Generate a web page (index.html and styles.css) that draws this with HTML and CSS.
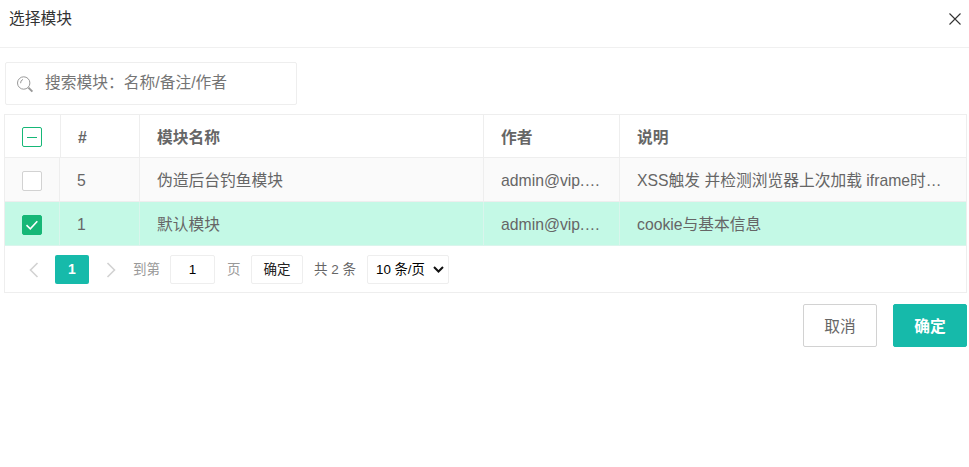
FILE: index.html
```html
<!DOCTYPE html>
<html lang="zh-CN">
<head>
<meta charset="utf-8">
<title>选择模块</title>
<link rel="stylesheet" href="styles.css">
</head>
<body>
<header class="head">
  <span class="title">选择模块</span>
  <svg class="close" width="14" height="14" viewBox="0 0 14 14"><path d="M1.5 1.5l11 11M12.5 1.5l-11 11" stroke="#333" stroke-width="1.1" fill="none"/></svg>
</header>
<div class="search">
  <svg class="search-icon" width="18" height="18" viewBox="0 0 18 18" fill="none"><circle cx="7.7" cy="8" r="6.2" stroke="#999" stroke-width="1"/><path d="M7 4.4a3.8 3.8 0 0 0-2.4 3.8" stroke="#999" stroke-width="1"/><path d="M12.4 12.6l4 4" stroke="#999" stroke-width="2"/></svg>
  <span class="placeholder">搜索模块：名称/备注/作者</span>
</div>
<section class="grid">
  <table class="thead">
    <colgroup><col class="c1h"><col class="c2h"><col class="c3"><col class="c4"><col></colgroup>
    <thead>
      <tr>
        <th><span class="box half"><i></i></span></th>
        <th>#</th><th>模块名称</th><th>作者</th><th>说明</th>
      </tr>
    </thead>
  </table>
  <table class="tbody">
    <colgroup><col class="c1b"><col class="c2b"><col class="c3"><col class="c4"><col></colgroup>
    <tbody>
      <tr class="odd">
        <td><span class="box"></span></td>
        <td>5</td><td>伪造后台钓鱼模块</td>
        <td><div class="cut">admin@vip.qq.com</div></td>
        <td><div class="cut">XSS触发 并检测浏览器上次加载 iframe时间与来源信息</div></td>
      </tr>
      <tr class="sel">
        <td><span class="box on"><svg width="14" height="12" viewBox="0 0 14 12" fill="none"><path d="M1.5 6.2l3.8 3.6 7-7.6" stroke="#fff" stroke-width="1.6"/></svg></span></td>
        <td>1</td><td>默认模块</td>
        <td><div class="cut">admin@vip.qq.com</div></td>
        <td><div class="cut">cookie与基本信息</div></td>
      </tr>
    </tbody>
  </table>
  <nav class="pager">
    <svg class="arrow" width="12" height="16" viewBox="0 0 12 16" fill="none"><path d="M9.5 1l-7 7 7 7" stroke="#d2d2d2" stroke-width="1.6"/></svg>
    <span class="cur">1</span>
    <svg class="arrow next" width="12" height="16" viewBox="0 0 12 16" fill="none"><path d="M2.5 1l7 7-7 7" stroke="#d2d2d2" stroke-width="1.6"/></svg>
    <span class="lbl to">到第</span>
    <span class="num">1</span>
    <span class="lbl page">页</span>
    <span class="go">确定</span>
    <span class="total">共 2 条</span>
    <span class="size-wrap">
      <select class="size"><option>10 条/页</option></select>
      <svg class="chev" width="11" height="7" viewBox="0 0 11 7" fill="none"><path d="M1 1l4.5 4.5L10 1" stroke="#111" stroke-width="2"/></svg>
    </span>
  </nav>
</section>
<footer class="foot">
  <button class="btn ghost">取消</button>
  <button class="btn primary">确定</button>
</footer>
</body>
</html>
```

FILE: styles.css
```css
* { box-sizing: border-box; }
html, body { margin: 0; padding: 0; background: #fff; }
body {
  width: 969px;
  height: 467px;
  overflow: hidden;
  font-family: "Liberation Sans", "Noto Sans CJK SC", sans-serif;
  font-size: 15.75px;
  color: #666;
}
.head {
  height: 48px;
  border-bottom: 1px solid #f0f0f0;
  display: flex;
  justify-content: space-between;
  align-items: flex-start;
  padding: 7px 7px 0 9px;
}
.title { font-size: 15.75px; line-height: 24px; color: #333; }
.close { margin-top: 5px; }
.search {
  margin: 14px 0 0 5px;
  width: 292px;
  height: 43px;
  border: 1px solid #eee;
  border-radius: 2px;
  display: flex;
  align-items: center;
  padding-left: 10px;
}
.search-icon { flex: none; }
.placeholder { margin-left: 11px; font-size: 15.75px; line-height: 38px; color: #757575; padding-bottom: 2px; }
.grid {
  margin: 9px 2px 0 4px;
  width: 963px;
  border: 1px solid #eee;
}
table {
  width: 100%;
  table-layout: fixed;
  border-collapse: separate;
  border-spacing: 0;
  font-size: 15.75px;
  line-height: 22px;
}
.c1h { width: 56px; }
.c2h { width: 79px; }
.c1b { width: 55px; }
.c2b { width: 80px; }
.c3 { width: 344px; }
.c4 { width: 136px; }
th, td {
  border-right: 1px solid #eee;
  border-bottom: 1px solid #eee;
  padding: 2px 17px 0;
  text-align: left;
  height: 44px;
  color: #666;
}
th { font-weight: 700; height: 43px; padding-top: 4px; }
tr > th:first-child { padding: 2px 0 0; }
tr > td:first-child { padding: 3px 0 0; }
tr > :last-child { border-right: 0; }
.odd td { background: #fafafa; }
.sel td { background: #c4f9e6; border-color: #d9f5ec; }
.cut { white-space: nowrap; overflow: hidden; text-overflow: ellipsis; }
.box {
  display: flex;
  width: 20px;
  height: 20px;
  margin-left: 17px;
  border: 1px solid #d2d2d2;
  border-radius: 2px;
  background: #fff;
  align-items: center;
  justify-content: center;
}
.box.half { border-color: #16b777; }
.box.half i { display: block; width: 10px; height: 1px; background: #16b777; }
.box.on { background: #16b777; border-color: #16b777; }
.pager {
  height: 46px;
  display: flex;
  align-items: flex-start;
  font-size: 13.5px;
  line-height: 29px;
  padding: 9px 0 0 23px;
}
.arrow { flex: none; margin-top: 7px; }
.cur {
  margin-left: 15px;
  width: 34px;
  height: 29px;
  background: #16baaa;
  color: #fff;
  font-weight: 700;
  font-size: 14px;
  border-radius: 2px;
  display: flex;
  align-items: center;
  justify-content: center;
}
.next { margin-left: 16px; }
.lbl { color: #999; }
.to { margin-left: 16px; }
.num {
  margin-left: 10px;
  width: 45px;
  height: 29px;
  border: 1px solid #eee;
  border-radius: 2px;
  color: #000;
  display: flex;
  align-items: center;
  justify-content: center;
}
.page { margin-left: 12px; width: 13.5px; }
.go {
  margin-left: 10.5px;
  width: 52px;
  height: 29px;
  border: 1px solid #eee;
  border-radius: 2px;
  color: #222;
  display: flex;
  align-items: center;
  justify-content: center;
}
.total { margin-left: 11px; color: #666; }
.size-wrap { position: relative; display: block; margin-left: 11px; width: 82px; height: 29px; }
.size {
  appearance: none;
  display: block;
  width: 82px;
  height: 29px;
  padding: 0 0 0 8px;
  border: 1px solid #eee;
  border-radius: 2px;
  background: #fff;
  color: #000;
  font: 13.33px "Liberation Sans", "Noto Sans CJK SC", sans-serif;
}
.chev { position: absolute; left: 66px; top: 11px; }
.foot {
  margin-top: 11px;
  display: flex;
  justify-content: flex-end;
  gap: 16px;
  padding-right: 2px;
}
.btn {
  width: 74px;
  height: 43px;
  border-radius: 2px;
  font: 15.75px "Liberation Sans", "Noto Sans CJK SC", sans-serif;
  padding: 0;
}
.ghost { background: #fff; border: 1px solid #d2d2d2; color: #666; }
.primary { background: #16baaa; border: 1px solid #16baaa; color: #fff; font-weight: 700; }
```
